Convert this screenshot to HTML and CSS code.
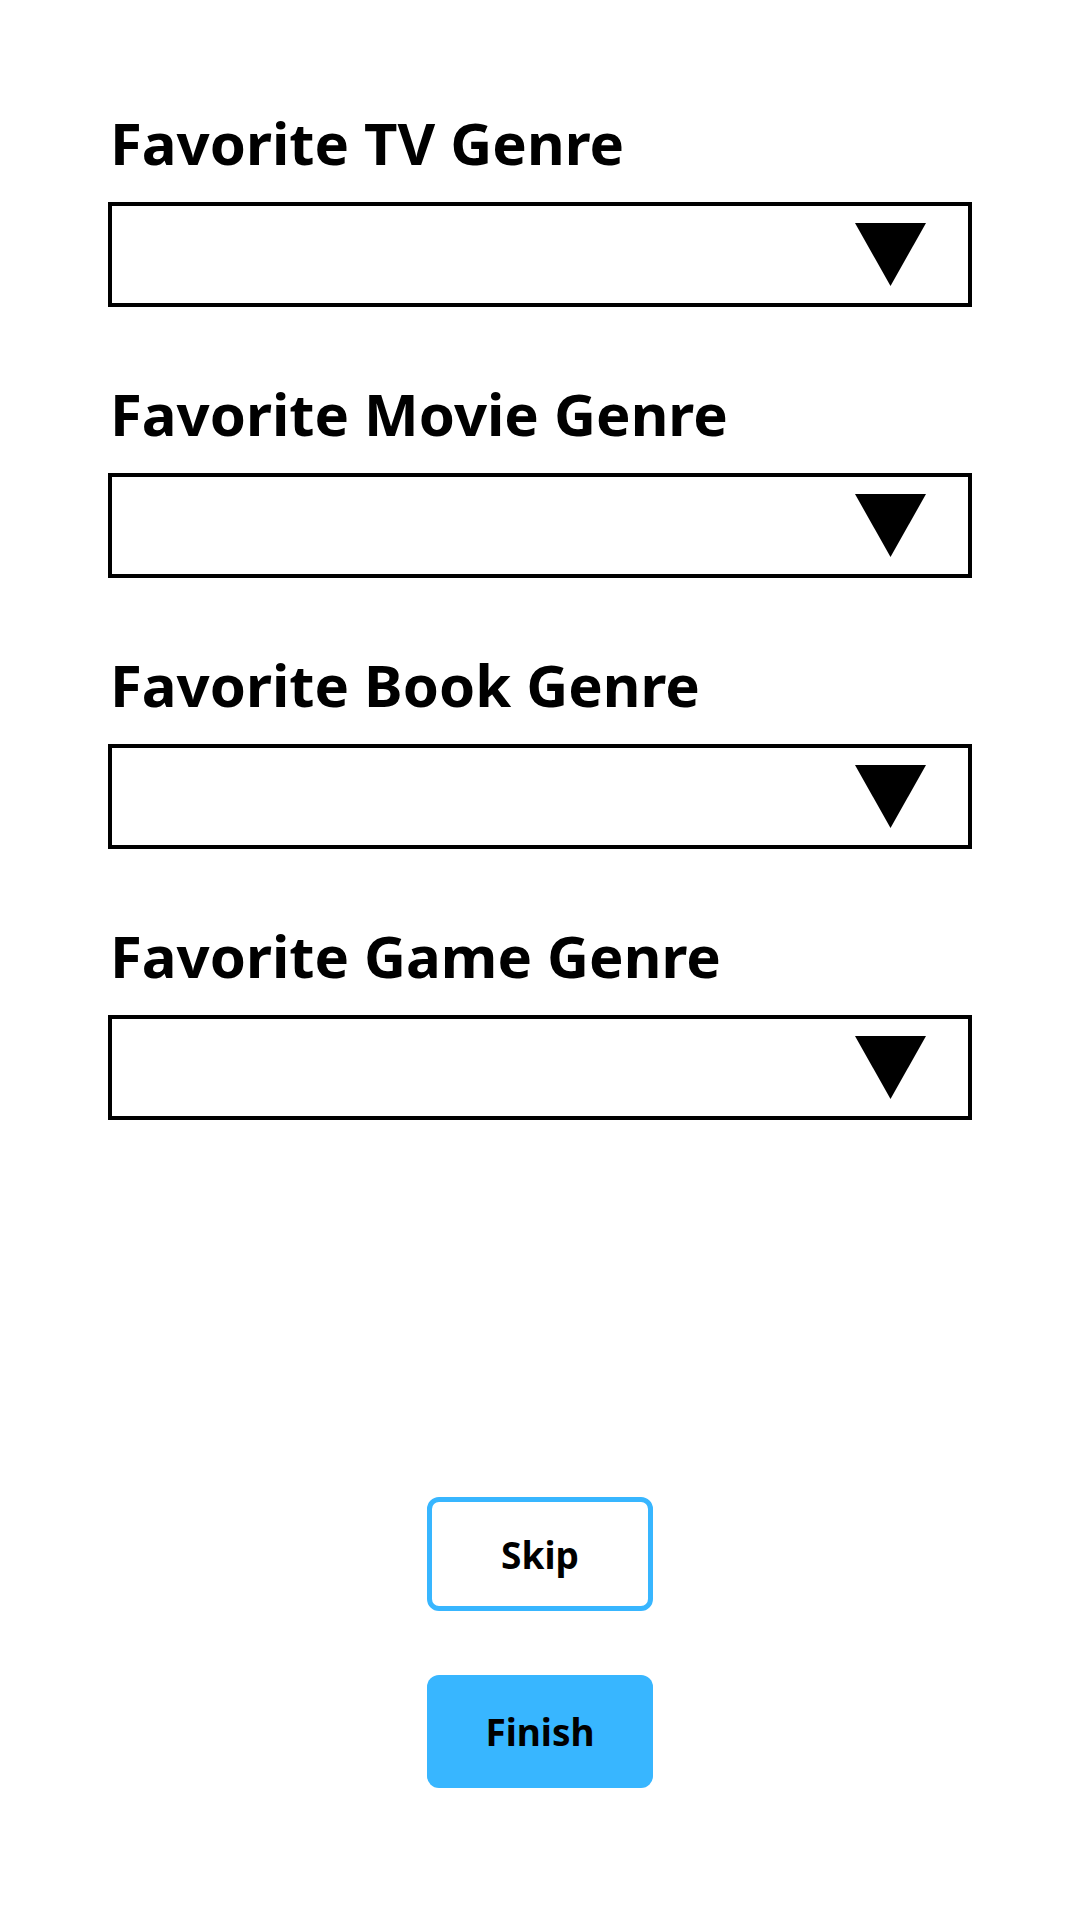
FILE: index.html
```html
<!DOCTYPE html>
<html>
<head>
<meta charset="utf-8">
<link rel="stylesheet" href="styles.css">
</head>
<body>
<main class="page">
  <section class="fields">
    <div class="field">
      <label class="label">Favorite TV Genre</label>
      <div class="select"><svg class="arrow" viewBox="0 0 71 63"><polygon points="0,0 71,0 35.5,63"/></svg></div>
    </div>
    <div class="field">
      <label class="label">Favorite Movie Genre</label>
      <div class="select"><svg class="arrow" viewBox="0 0 71 63"><polygon points="0,0 71,0 35.5,63"/></svg></div>
    </div>
    <div class="field">
      <label class="label">Favorite Book Genre</label>
      <div class="select"><svg class="arrow" viewBox="0 0 71 63"><polygon points="0,0 71,0 35.5,63"/></svg></div>
    </div>
    <div class="field">
      <label class="label">Favorite Game Genre</label>
      <div class="select"><svg class="arrow" viewBox="0 0 71 63"><polygon points="0,0 71,0 35.5,63"/></svg></div>
    </div>
  </section>
  <section class="actions">
    <button class="btn btn-skip">Skip</button>
    <button class="btn btn-finish">Finish</button>
  </section>
</main>
</body>
</html>
```

FILE: styles.css
```css
html, body {
  margin: 0;
  padding: 0;
  background: #fff;
}
body {
  width: 1080px;
  height: 1920px;
  font-family: "Noto Sans", "Liberation Sans", sans-serif;
  color: #000;
}
.page {
  padding: 108px 108px 0 108px;
}
.fields {
  display: flex;
  flex-direction: column;
  gap: 72px;
}
.field {
  display: flex;
  flex-direction: column;
}
.label {
  display: block;
  font-size: 58px;
  font-weight: 700;
  line-height: 70px;
  margin-left: 2px;
  margin-bottom: 24px;
}
.select {
  box-sizing: border-box;
  width: 864px;
  height: 105px;
  border: 4px solid #000;
  display: flex;
  align-items: center;
  justify-content: flex-end;
  padding-right: 42px;
}
.arrow {
  width: 71px;
  height: 63px;
  fill: #000;
}
.actions {
  display: flex;
  flex-direction: column;
  align-items: center;
  gap: 64px;
  margin-top: 377px;
}
.btn {
  box-sizing: border-box;
  width: 226px;
  height: 114px;
  border-radius: 12px;
  font-family: inherit;
  font-size: 37px;
  font-weight: 700;
  color: #000;
  cursor: pointer;
}
.btn-skip {
  background: #fff;
  border: 5px solid #38b6ff;
}
.btn-finish {
  background: #38b6ff;
  border: none;
  height: 113px;
}
```
